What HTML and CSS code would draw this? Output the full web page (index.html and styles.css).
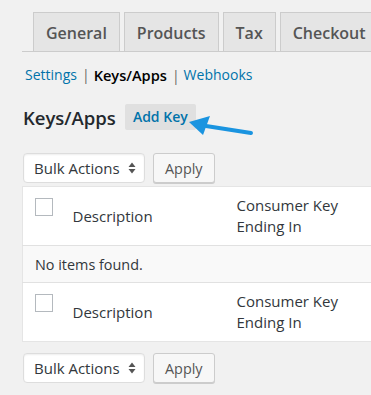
FILE: index.html
```html
<!DOCTYPE html>
<html lang="en">
<head>
  <meta charset="UTF-8">
  <meta name="viewport" content="width=device-width, initial-scale=1.0">
  <title>Keys/Apps</title>
  <link rel="stylesheet" href="styles.css">
</head>

<body>
  <div class="wrap">
    <nav class="nav-tabs">
      <a class="nav-tab" href="#">General</a>
      <a class="nav-tab" href="#">Products</a>
      <a class="nav-tab" href="#">Tax</a>
      <a class="nav-tab" href="#">Checkout</a>
    </nav>

    <ul class="subsubsub">
      <li><a href="#">Settings</a><span class="sep">|</span></li>
      <li><span class="current">Keys/Apps</span><span class="sep">|</span></li>
      <li><a href="#">Webhooks</a></li>
    </ul>

    <div class="page-title">
      <h2>Keys/Apps</h2>
      <a class="add-new" href="#">Add Key</a>
    </div>

    <div class="tablenav">
      <div class="select">Bulk Actions
        <svg class="updown" width="8" height="12" viewBox="0 0 8 12"><path d="M4 0.5 L7.5 5 L0.5 5 Z M0.5 7 L7.5 7 L4 11.5 Z" fill="#555"/></svg>
      </div>
      <button class="button">Apply</button>
    </div>

    <table class="list">
      <thead>
        <tr>
          <td class="check"><span class="box"></span></td>
          <th class="desc">Description</th>
          <th class="key">Consumer Key Ending In</th>
          <th></th>
        </tr>
      </thead>
      <tbody>
        <tr class="empty">
          <td colspan="4">No items found.</td>
        </tr>
      </tbody>
      <tfoot>
        <tr>
          <td class="check"><span class="box"></span></td>
          <th class="desc">Description</th>
          <th class="key">Consumer Key Ending In</th>
          <th></th>
        </tr>
      </tfoot>
    </table>

    <div class="tablenav bottom">
      <div class="select">Bulk Actions
        <svg class="updown" width="8" height="12" viewBox="0 0 8 12"><path d="M4 0.5 L7.5 5 L0.5 5 Z M0.5 7 L7.5 7 L4 11.5 Z" fill="#555"/></svg>
      </div>
      <button class="button">Apply</button>
    </div>

    <!-- annotation arrow pointing at Add Key -->
    <svg class="pointer" width="80" height="30" viewBox="0 0 80 30">
      <path d="M62 17 L17 10" stroke="#1a94e0" stroke-width="4" stroke-linecap="round"/>
      <path d="M0 6 L21 0 L14 19 Z" fill="#1a94e0"/>
    </svg>
  </div>
</body>
</html>
```

FILE: styles.css
```css
body {
  margin: 0;
  background-color: #f1f1f1;
  font-family: "Open Sans", sans-serif;
  font-size: 14px;
  color: #32373c;
  overflow: hidden;
}

.wrap {
  position: relative;
  padding: 12px 0 0 22px;
  width: 460px;
}

.nav-tabs {
  display: flex;
  padding-left: 11px;
  border-bottom: 1px solid #ccc;
}

.nav-tab {
  display: block;
  height: 38px;
  line-height: 40px;
  padding: 0 12px;
  margin-right: 4px;
  margin-bottom: -1px;
  border: 1px solid #ccc;
  background-color: #e5e5e5;
  color: #555;
  font-size: 16px;
  font-weight: 600;
  text-decoration: none;
}

.subsubsub {
  display: flex;
  list-style: none;
  margin: 13px 0 0 3px;
  padding: 0;
  line-height: 20px;
}

.subsubsub a {
  color: #0073aa;
  text-decoration: none;
}

.subsubsub .current {
  color: #000;
  font-weight: 600;
  font-size: 14.6px;
}

.sep {
  color: #666;
  margin: 0 4px 0 5px;
}

.page-title {
  display: flex;
  align-items: center;
  margin-top: 18px;
  height: 26px;
}

.page-title h2 {
  margin: 0 0 0 1px;
  font-size: 18.5px;
  font-weight: 600;
  color: #23282d;
}

.add-new {
  margin-left: 9px;
  padding: 0 8px;
  height: 26px;
  line-height: 25px;
  background-color: #e0e0e0;
  border-radius: 2px;
  color: #0073aa;
  font-weight: 600;
  text-decoration: none;
}

.tablenav {
  display: flex;
  gap: 8px;
  margin: 23px 0 3px 1px;
}

.tablenav.bottom {
  margin-top: 11px;
}

.select {
  display: flex;
  align-items: center;
  justify-content: space-between;
  width: 102px;
  height: 28px;
  padding: 0 8px 0 10px;
  background-color: #fff;
  border: 1px solid #ddd;
  border-radius: 4px;
  box-shadow: inset 0 1px 2px rgba(0, 0, 0, 0.07);
  color: #32373c;
  font-size: 15px;
}

.button {
  height: 30px;
  padding: 0 11px;
  font-family: "Open Sans", sans-serif;
  font-size: 14.4px;
  color: #555;
  background-color: #f7f7f7;
  border: 1px solid #ccc;
  border-radius: 3px;
  box-shadow: 0 1px 0 #ccc;
}

.list {
  border-collapse: collapse;
  table-layout: fixed;
  width: 420px;
  background-color: #fff;
  border: 1px solid #e5e5e5;
}

.list th {
  font-weight: normal;
  font-size: 15px;
  text-align: left;
  color: #32373c;
}

.list thead tr,
.list tfoot tr {
  height: 57px;
}

.list .check {
  width: 40px;
  padding: 11px 0 0 12px;
  vertical-align: top;
  box-sizing: border-box;
}

.box {
  display: block;
  width: 16px;
  height: 16px;
  border: 1px solid #b4b9be;
  background-color: #fff;
}

.list .desc {
  width: 164px;
  padding: 0 10px;
  box-sizing: border-box;
}

.list .key {
  width: 134px;
  padding: 8px 10px;
  line-height: 21px;
  box-sizing: border-box;
}

.list .empty td {
  height: 36px;
  padding: 0 0 0 12px;
  font-size: 14.4px;
  background-color: #f9f9f9;
  border-top: 1px solid #e1e1e1;
  border-bottom: 1px solid #e1e1e1;
}

.pointer {
  position: absolute;
  left: 189px;
  top: 116px;
}
```
